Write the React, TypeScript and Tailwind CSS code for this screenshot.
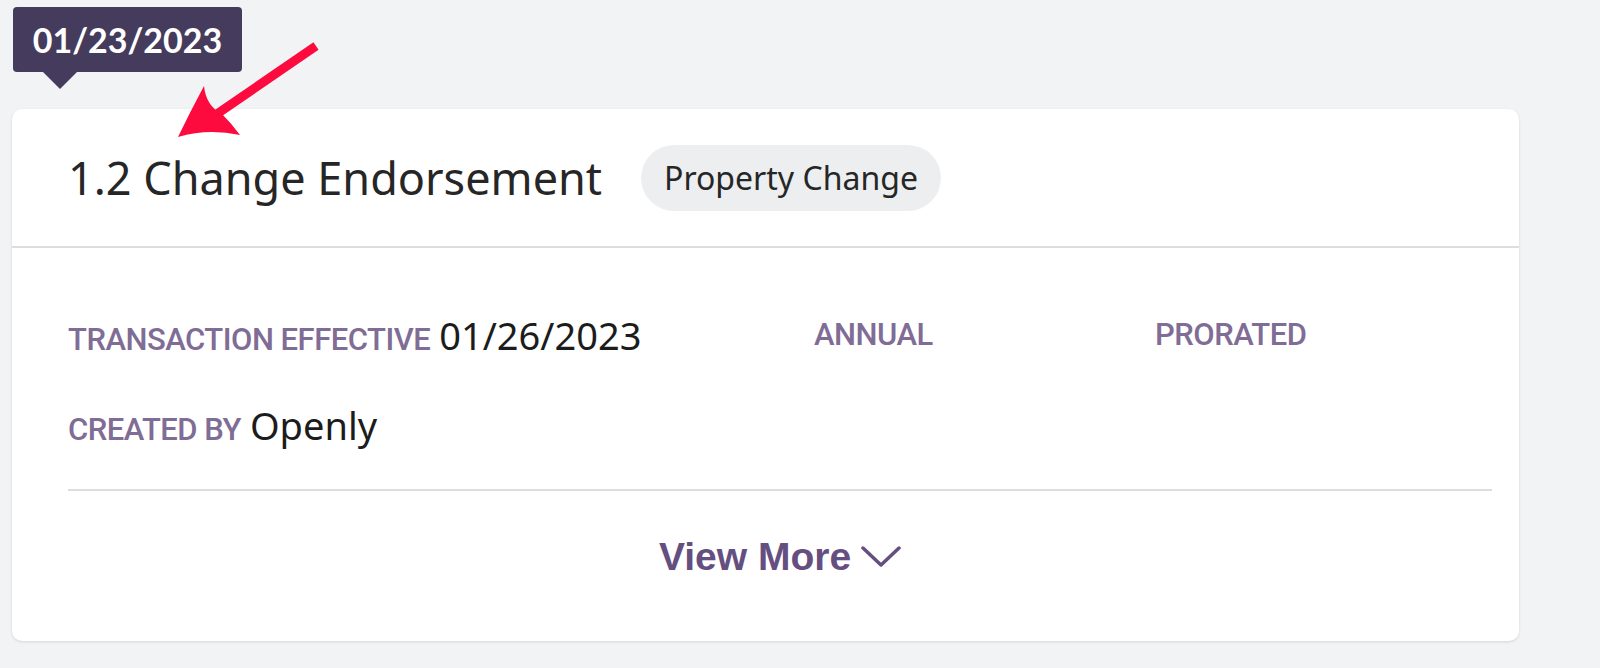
import React from 'react'

const purple = 'text-[#7f6d96]'

function Field({ label, value }: { label: string; value?: string }) {
  return (
    <div className="flex items-baseline gap-[9px] whitespace-nowrap">
      <span
        className={`${purple} text-[31px] font-medium tracking-[-0.5px]`}
        style={{ fontFamily: '"Liberation Sans Narrow", "Roboto", sans-serif' }}
      >
        {label}
      </span>
      {value && (
        <span className="text-[38px] text-[#1c1c1c]" style={{ fontFamily: '"Noto Sans", sans-serif' }}>
          {value}
        </span>
      )}
    </div>
  )
}

export default function App() {
  return (
    <div className="relative w-[1600px] h-[668px] overflow-hidden bg-[#f2f3f5]">
      {/* date tooltip */}
      <div className="absolute left-[13px] top-[7px]">
        <div
          className="w-[229px] h-[65px] rounded-[4px] bg-[#453b5d] text-white text-[34px] font-bold flex items-center justify-center"
          style={{ fontFamily: 'Lato, "Noto Sans", sans-serif' }}
        >
          01/23/2023
        </div>
        <div className="ml-[30px] w-0 h-0 border-l-[17px] border-r-[17px] border-t-[17px] border-l-transparent border-r-transparent border-t-[#453b5d]" />
      </div>

      {/* annotation arrow */}
      <svg className="absolute left-0 top-0" width="360" height="160" viewBox="0 0 360 160">
        <line x1="316" y1="46" x2="214" y2="116" stroke="#fd0a3f" strokeWidth="9" />
        <path d="M178,137 Q190,112 204,86 Q206,106 222,114 Q232,124 240,135 Q208,128 178,137 Z" fill="#fd0a3f" />
      </svg>

      <div className="pt-[109px] pl-3 pr-[81px]">
        <div className="bg-white rounded-[10px] shadow-[0_1px_3px_rgba(0,0,0,0.12)] h-[532px]">
          <div className="h-[139px] border-b-2 border-[#dddddd] flex items-center pl-[56px] gap-[39px]">
            <h1 className="text-[45px] text-[#262626]" style={{ fontFamily: '"Noto Sans", sans-serif' }}>
              1.2 Change Endorsement
            </h1>
            <span
              className="h-[66px] px-[23px] rounded-full bg-[#eceef0] text-[32px] text-[#262626] flex items-center"
              style={{ fontFamily: '"Noto Sans", sans-serif' }}
            >
              Property Change
            </span>
          </div>

          <div className="pl-[56px] pr-[27px] pt-[59px]">
            <div className="grid grid-cols-[746px_341px_1fr] h-[46px] items-center">
              <Field label="TRANSACTION EFFECTIVE" value="01/26/2023" />
              <Field label="ANNUAL" />
              <Field label="PRORATED" />
            </div>
            <div className="mt-[49px] h-[46px] flex items-center">
              <Field label="CREATED BY" value="Openly" />
            </div>
            <div className="mt-[41px] border-t-2 border-[#dddddd]" />
            <div className="h-[132px] flex items-center justify-center gap-[10px] text-[#654f80]">
              <span className="text-[39px] font-bold" style={{ fontFamily: '"Liberation Sans", Arial, sans-serif' }}>
                View More
              </span>
              <svg width="40" height="24" viewBox="0 0 40 24" fill="none">
                <path d="M2,3 L20,20 L38,3" stroke="#654f80" strokeWidth="3.5" strokeLinecap="round" strokeLinejoin="round" />
              </svg>
            </div>
          </div>
        </div>
      </div>
    </div>
  )
}
